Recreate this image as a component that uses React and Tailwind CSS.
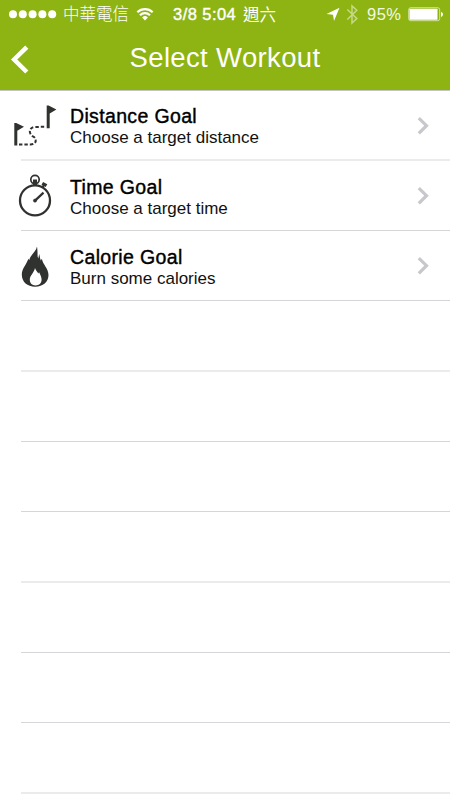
import { Fragment } from 'react';

function DistanceIcon() {
  return (
    <svg width="70" height="70" viewBox="0 0 70 70" fill="none">
      <g fill="#30322f">
        <path d="M14.300 32h1.900l7.800 3.700-6.700 4v14.800h-3V32.300z" />
        <path d="M46.700 14.600h1.900l7.800 3.800-6.700 4v14.800h-3V15z" />
      </g>
      <path
        d="M19 53.500h11.500c6.500-.2 6.600-6.300 2.400-8.200C28.500 42.500 28.500 37 34.500 36L46 35.700"
        stroke="#30322f"
        strokeWidth="2"
        strokeDasharray="3.400 2"
      />
    </svg>
  );
}

function StopwatchIcon() {
  return (
    <svg width="70" height="70" viewBox="0 0 70 70" fill="none" stroke="#30322f">
      <circle cx="35" cy="39.400" r="15" strokeWidth="2.300" />
      <circle cx="35" cy="18.600" r="4.200" strokeWidth="1.700" />
      <path d="M35 18.500v6" strokeWidth="4" />
      <path d="M42.500 26.500l2-3.500" strokeWidth="2.200" />
      <path d="M42.300 22.300l4.200 2.400" strokeWidth="3.200" />
      <path d="M35 39.600l8.500-8" strokeWidth="2.200" />
      <circle cx="35" cy="39.600" r="1.600" fill="#30322f" strokeWidth=".6" />
    </svg>
  );
}

function FlameIcon() {
  return (
    <svg width="70" height="70" viewBox="0 0 70 70">
      <path
        fill="#30322f"
        fillRule="evenodd"
        d="M37 15.500c.500 3 .6 6 .6 10l.7 2 .9-4.500c.8 3 .9 4.500 1.500 6.500l1.200-1.800c1 6 6.600 9.800 6.600 16.300 0 7-5.500 11.700-13.300 11.700S21.800 51 21.800 43.500c0-6 4.500-9.500 6.500-15.800l1 1.500C29.800 24.500 36 21 37 15.500zM35 37c-1 5-5.200 7.500-5.200 11.700 0 3.500 2.300 5.700 5.800 5.700s6-2.200 6-5.700c0-3-1.500-5-2.500-7.500l-.8 1.300C37.500 41 35.500 39.300 35 37z"
      />
    </svg>
  );
}

const workouts = [
  { title: 'Distance Goal', subtitle: 'Choose a target distance', icon: DistanceIcon, offset: 'pt-[14px]' },
  { title: 'Time Goal', subtitle: 'Choose a target time', icon: StopwatchIcon, offset: 'pt-[15px]' },
  { title: 'Calorie Goal', subtitle: 'Burn some calories', icon: FlameIcon, offset: 'pt-[15px]' },
];

// The list pitch is 70 1/3 px, so every third separator straddles two pixels
const rows = [
  'h-[70px] after:h-[2px] after:bg-[#ebebeb]',
  'h-[70px] after:h-px after:bg-[#d6d6d8]',
  'h-[70px] after:h-px after:bg-[#d6d6d8]',
  'h-[71px] after:h-[2px] after:bg-[#ebebeb]',
  'h-[70px] after:h-px after:bg-[#d6d6d8]',
  'h-[70px] after:h-px after:bg-[#d6d6d8]',
  'h-[71px] after:h-[2px] after:bg-[#ebebeb]',
  'h-[70px] after:h-px after:bg-[#d6d6d8]',
  'h-[70px] after:h-px after:bg-[#d6d6d8]',
  'h-[71px] after:h-[2px] after:bg-[#ebebeb]',
];

function StatusBar() {
  return (
    <div className="flex h-7 items-center text-white">
      <svg className="ml-[9px] shrink-0" width="48" height="28" fill="currentColor">
        {[4, 13.8, 23.6, 33.4, 43.2].map((cx) => (
          <circle key={cx} cx={cx} cy="14.300" r="4" />
        ))}
      </svg>
      <span className="ml-[6px] w-[67px] whitespace-nowrap font-['Liberation_Sans','Noto_Sans_CJK_TC',sans-serif] text-[16.5px] font-light leading-7">中華電信</span>
      <svg className="ml-[6px] shrink-0" width="18" height="28" viewBox="0 0 18 28" fill="none" stroke="currentColor" strokeWidth="2.200">
        <path d="M1.300 12.200a11 11 0 0 1 15.400 0" />
        <path d="M4 15.300a7 7 0 0 1 10 0" />
        <path d="M9 20.400l-2.900-3a4.100 4.100 0 0 1 5.800 0z" fill="currentColor" stroke="none" />
      </svg>
      <div className="ml-[19px] flex w-[104px] whitespace-nowrap text-[16.5px] leading-7">
        <span className="w-[70px] font-['Liberation_Sans',sans-serif] tracking-[0.45px] [-webkit-text-stroke:0.4px_white]">3/8 5:04</span>
        <span className="font-['Noto_Sans_CJK_TC',sans-serif] font-normal">週六</span>
      </div>
      <svg className="ml-[49px] shrink-0" width="14" height="28" fill="currentColor">
        <path d="M13.500 7.800L8 21 7 14.800.500 14z" />
      </svg>
      <svg className="ml-[6px] shrink-0 opacity-50" width="13" height="28" fill="none" stroke="currentColor" strokeWidth="1.500">
        <path d="M1.300 9.500l9.500 9-4.800 4.500V6L10.800 10.300 1.300 19.500" />
      </svg>
      <span className="ml-[8px] w-[37px] whitespace-nowrap font-['Liberation_Sans',sans-serif] text-[16.5px] leading-7 tracking-[0.5px] opacity-90">95%</span>
      <svg className="ml-[4px] shrink-0" width="36" height="28" fill="none">
        <rect x=".700" y="7.700" width="31" height="13" rx="2" stroke="white" strokeOpacity=".6" />
        <rect x="1.500" y="8.700" width="28" height="11" rx=".500" fill="white" />
        <path d="M33 12q2 .500 2 2.400T33 17z" fill="white" />
      </svg>
    </div>
  );
}

export default function App() {
  return (
    <div className="flex h-[799px] w-[450px] flex-col overflow-hidden bg-white font-['Liberation_Sans',Arial,sans-serif]">
      <header className="h-[91px] shrink-0 border-b border-[#c4c4c0] bg-[#8db412]">
        <StatusBar />
        <div className="grid h-[62px] grid-cols-[60px_330px_60px] text-white">
          <button type="button" aria-label="Back">
            <svg width="60" height="62" fill="none" stroke="white" strokeWidth="4.500">
              <path d="M26.800 19.200L14.200 31.500l12.600 12.500" />
            </svg>
          </button>
          <h1 className="text-center text-[27.5px] leading-[60px] tracking-[0.35px]">Select Workout</h1>
        </div>
      </header>

      <main>
        {rows.map((row, i) => {
          const workout = workouts[i];
          const Icon = workout?.icon;
          return (
            <div
              key={i}
              className={`relative flex after:absolute after:bottom-0 after:left-[21px] after:right-0 ${row}`}
            >
              {workout && (
                <Fragment>
                  <Icon />
                  <div className={`flex-1 text-black ${workout.offset}`}>
                    <div className="text-[19.5px] leading-[23px] tracking-[0.35px] [-webkit-text-stroke:0.4px_black]">{workout.title}</div>
                    <div className="text-[17px] leading-[19px] text-[#111]">{workout.subtitle}</div>
                  </div>
                  <svg width="50" height="70" fill="none" stroke="#c7c7cc" strokeWidth="3.200">
                    <path d="M18.800 27.200l7.700 7.500-7.700 7.700" />
                  </svg>
                </Fragment>
              )}
            </div>
          );
        })}
      </main>
    </div>
  );
}
